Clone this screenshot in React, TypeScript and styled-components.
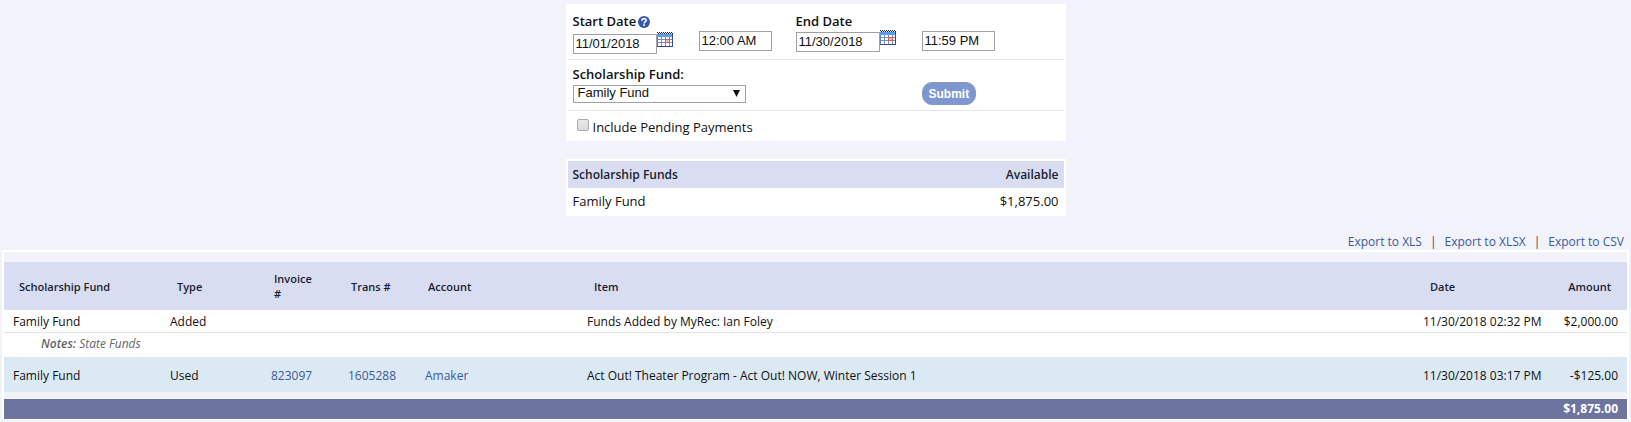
import React from "react";
import styled, { createGlobalStyle } from "styled-components";

const GlobalStyle = createGlobalStyle`
  *, *::before, *::after { box-sizing: border-box; }
  body {
    margin: 0;
    background: #f2f2fb;
    color: #111;
    font: 12px/18px "Open Sans", "Liberation Sans", sans-serif;
  }
  a { color: #3b5998; text-decoration: none; }
  a:hover { text-decoration: underline; }
`;

const Page = styled.main`
  padding: 4px 2px 0;
`;

const Panel = styled.section`
  max-width: 500px;
  margin: 0 auto 18px;
  border: 2px solid #fff;
  background: #fff;
`;

const FormRow = styled.div<{ $top: number }>`
  display: grid;
  grid-template-columns: 126px 97px 126px 1fr;
  align-items: start;
  padding: ${(p) => p.$top}px 5px 5px;
  border-bottom: 1px solid #e6e6ea;
`;

const Field = styled.div<{ $wide?: boolean; $unlabelled?: boolean }>`
  grid-column: ${(p) => (p.$wide ? "span 3" : "auto")};
  padding-top: ${(p) => (p.$unlabelled ? "18px" : "0")};
`;

const LabelLine = styled.div`
  display: flex;
  align-items: flex-start;
  gap: 2px;
`;

const Label = styled.label`
  font-size: 13px;
  font-weight: 600;
  line-height: 17px;
  padding-bottom: 2px;
`;

const IconButton = styled.button`
  display: block;
  padding: 0;
  border: 0;
  background: none;
  cursor: pointer;
`;

const HelpButton = styled(IconButton)`
  height: 21px;
  padding: 3px 0 7px;
`;

const CalendarButton = styled(IconButton)`
  margin-top: -2px;
`;

const InputLine = styled.div`
  display: flex;
  align-items: flex-start;
`;

const TextInput = styled.input<{ $width: number }>`
  display: block;
  width: ${(p) => p.$width}px;
  height: 20px;
  padding: 0 2px 1px;
  border: 1px solid #a0a0a4;
  border-radius: 0;
  background: #fff;
  color: #111;
  font: 13px "Liberation Sans", Arial, sans-serif;
`;

const SelectBox = styled.div`
  position: relative;
  width: 173px;
  svg { position: absolute; right: 6px; top: 5px; pointer-events: none; }
`;

const Select = styled.select`
  display: block;
  width: 100%;
  height: 18px;
  padding: 0 4px 2px;
  appearance: none;
  border: 1px solid #a0a0a4;
  border-radius: 0;
  background: #fff;
  color: #111;
  font: 13px/14px "Liberation Sans", Arial, sans-serif;
`;

const SubmitButton = styled.button`
  display: block;
  justify-self: start;
  height: 23px;
  margin-top: 16px;
  padding: 0 6px;
  border: 1px solid #8a98c4;
  border-radius: 10px;
  background: #7e97cf;
  color: #fff;
  font: bold 12px "Liberation Sans", Arial, sans-serif;
  cursor: pointer;
`;

const CheckRow = styled.div`
  display: flex;
  align-items: flex-start;
  gap: 4px;
  height: 28px;
  padding: 7px 9px 0;
`;

const Checkbox = styled.input`
  appearance: none;
  width: 12px;
  height: 12px;
  margin: 1px 0 0;
  border: 1px solid #aaa;
  border-radius: 2px;
  background: linear-gradient(#e8e8e8, #dcdcdc);
  &:checked { background: #3b5998; }
`;

const CheckLabel = styled.label`
  font-size: 13px;
  line-height: 19px;
`;

const FundTable = styled.table`
  width: 100%;
  border-collapse: collapse;
  font-size: 13px;
  th, td { height: 26px; padding: 0 5px; text-align: left; }
  th { height: 27px; background: #d8ddf1; color: #1a1d33; font-size: 12px; font-weight: 600; }
  th:last-child, td:last-child { text-align: right; }
`;

const ExportBar = styled.nav`
  display: flex;
  justify-content: flex-end;
  gap: 8px;
  padding: 0 5px;
  color: #444;
  line-height: 16px;
`;

const Report = styled.section`
  border: 2px solid #fff;
  border-bottom-width: 1px;
  padding-top: 10px;
`;

const ReportTable = styled.table`
  width: 100%;
  table-layout: fixed;
  border-spacing: 0;
  td { padding: 0 9px; }
`;

const Col = styled.col<{ $width?: number }>`
  width: ${(p) => (p.$width ? `${p.$width}px` : "auto")};
`;

const HeadCell = styled.th<{ $inset: number; $end?: boolean }>`
  height: 48px;
  padding: 0 ${(p) => (p.$end ? 16 : 20)}px 0 ${(p) => p.$inset}px;
  background: #d8ddf1;
  color: #1a1d33;
  font-size: 11px;
  line-height: 15px;
  font-weight: 600;
  text-align: ${(p) => (p.$end ? "right" : "left")};
`;

const EntryRow = styled.tr<{ $used?: boolean }>`
  height: ${(p) => (p.$used ? "35px" : "23px")};
  background: ${(p) => (p.$used ? "#dbe9f4" : "#fff")};
  td {
    padding-top: 2px;
    border-bottom: ${(p) => (p.$used ? "0" : "1px solid #e4e4e8")};
    white-space: nowrap;
  }
  td:last-child { text-align: right; }
`;

const NotesRow = styled.tr`
  height: 24px;
  background: #fff;
  color: #666;
  font-style: italic;
  td { padding: 0 37px 3px; }
  strong { font-weight: 600; }
`;

const TotalCell = styled.td`
  height: 27px;
  border-top: 7px solid #f3f3f7;
  background: #6d759f;
  background-clip: padding-box;
  color: #fff;
  font-weight: 700;
  text-align: right;
`;

const HelpIcon = () => (
  <svg width="12" height="12" viewBox="0 0 11 11" aria-hidden="true" display="block">
    <circle cx="5.5" cy="5.5" r="5.5" fill="#3357b0" />
    <path d="M3.6 4.3c0-2.5 3.9-2.4 3.9-.1 0 1.3-1.9 1.2-1.9 2.6" fill="none" stroke="#fff" strokeWidth="1.5" />
    <rect x="4.8" y="7.6" width="1.6" height="1.5" fill="#fff" />
  </svg>
);

const CalendarIcon = () => (
  <svg width="16" height="16" viewBox="0 0 16 16" aria-hidden="true" display="block" shapeRendering="crispEdges">
    <rect y="2" width="16" height="13" fill="#5f7fc8" />
    <rect y="1" width="16" height="4" fill="#5b9bf0" />
    <path d="M0 .5h16" stroke="#222" strokeDasharray="1 1" />
    <path d="M1 1.5h15" stroke="#222" strokeDasharray="1 1" />
    <path d="M0 1.5h16" stroke="#dde6f5" strokeDasharray="1 1" />
    <rect x="1" y="5" width="14" height="9" fill="#fff" />
    <path d="M1 7.5h14M1 10.5h14M4.5 5v9M8.5 5v9M12.5 5v9" stroke="#6f8cd4" />
    <path d="M9 7.5h4M9 10.5h4M12.5 7v4M8.5 7v4" stroke="#d9604f" />
    <rect x="9" y="8" width="3" height="2" fill="#f3b7ae" />
    <path d="M15.5 2v13M0 14.5h16" stroke="#2f4c90" />
  </svg>
);

interface DateFieldProps {
  id: string;
  label: string;
  value: string;
  help?: boolean;
}

const DateField = ({ id, label, value, help }: DateFieldProps) => (
  <Field>
    <LabelLine>
      <Label htmlFor={id}>{label}</Label>
      {help && <HelpButton type="button" aria-label="Help"><HelpIcon /></HelpButton>}
    </LabelLine>
    <InputLine>
      <TextInput id={id} $width={84} defaultValue={value} />
      <CalendarButton type="button" aria-label={`Choose ${label}`}><CalendarIcon /></CalendarButton>
    </InputLine>
  </Field>
);

const columns = [
  { name: "Scholarship Fund", width: 157, inset: 15 },
  { name: "Type", width: 101, inset: 16 },
  { name: "Invoice #", width: 77, inset: 12 },
  { name: "Trans #", width: 77, inset: 12 },
  { name: "Account", width: 162, inset: 12 },
  { name: "Item", inset: 16 },
  { name: "Date", width: 135, inset: 16 },
  { name: "Amount", width: 78, inset: 0, end: true },
];

export default function App() {
  return (
    <>
      <GlobalStyle />
      <Page>
        <Panel as="form" onSubmit={(e: React.FormEvent) => e.preventDefault()}>
          <FormRow $top={7}>
            <DateField id="start" label="Start Date" value="11/01/2018" help />
            <Field $unlabelled>
              <TextInput aria-label="Start time" $width={73} defaultValue="12:00 AM" />
            </Field>
            <DateField id="end" label="End Date" value="11/30/2018" />
            <Field $unlabelled>
              <TextInput aria-label="End time" $width={73} defaultValue="11:59 PM" />
            </Field>
          </FormRow>
          <FormRow $top={6}>
            <Field $wide>
              <LabelLine><Label htmlFor="fund">Scholarship Fund:</Label></LabelLine>
              <SelectBox>
                <Select id="fund"><option>Family Fund</option></Select>
                <svg width="7" height="7" viewBox="0 0 7 7" aria-hidden="true">
                  <path d="M0 0h7L3.5 7z" fill="#111" />
                </svg>
              </SelectBox>
            </Field>
            <SubmitButton type="submit">Submit</SubmitButton>
          </FormRow>
          <CheckRow>
            <Checkbox type="checkbox" id="pending" />
            <CheckLabel htmlFor="pending">Include Pending Payments</CheckLabel>
          </CheckRow>
        </Panel>

        <Panel>
          <FundTable>
            <thead><tr><th>Scholarship Funds</th><th>Available</th></tr></thead>
            <tbody><tr><td>Family Fund</td><td>$1,875.00</td></tr></tbody>
          </FundTable>
        </Panel>

        <ExportBar>
          <a href="#xls">Export to XLS</a><span>|</span>
          <a href="#xlsx">Export to XLSX</a><span>|</span>
          <a href="#csv">Export to CSV</a>
        </ExportBar>

        <Report>
          <ReportTable>
            <colgroup>{columns.map((c) => <Col key={c.name} $width={c.width} />)}</colgroup>
            <thead>
              <tr>
                {columns.map((c) => (
                  <HeadCell key={c.name} $inset={c.inset} $end={c.end}>{c.name}</HeadCell>
                ))}
              </tr>
            </thead>
            <tbody>
              <EntryRow>
                <td>Family Fund</td><td>Added</td><td /><td /><td />
                <td>Funds Added by MyRec: Ian Foley</td>
                <td>11/30/2018 02:32 PM</td><td>$2,000.00</td>
              </EntryRow>
              <NotesRow><td colSpan={8}><strong>Notes:</strong> State Funds</td></NotesRow>
              <EntryRow $used>
                <td>Family Fund</td><td>Used</td>
                <td><a href="#invoice">823097</a></td>
                <td><a href="#transaction">1605288</a></td>
                <td><a href="#account">Amaker</a></td>
                <td>Act Out! Theater Program - Act Out! NOW, Winter Session 1</td>
                <td>11/30/2018 03:17 PM</td><td>-$125.00</td>
              </EntryRow>
            </tbody>
            <tfoot><tr><TotalCell colSpan={8}>$1,875.00</TotalCell></tr></tfoot>
          </ReportTable>
        </Report>
      </Page>
    </>
  );
}
